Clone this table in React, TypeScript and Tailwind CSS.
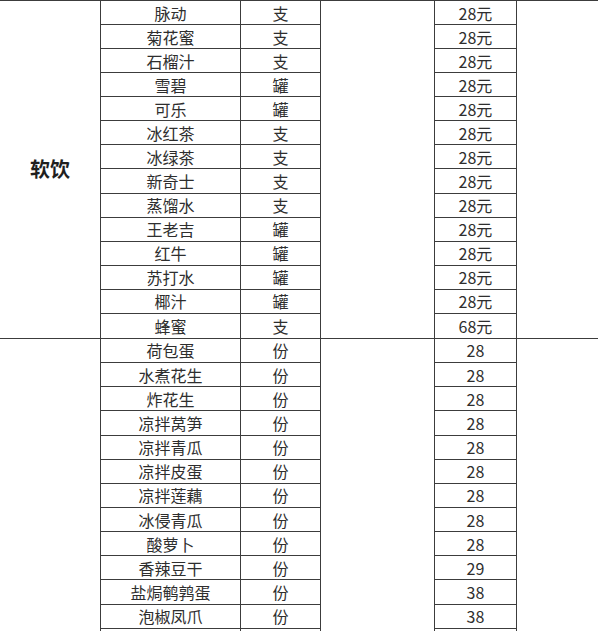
const drinks = [
  { name: '脉动', unit: '支', price: '28元' },
  { name: '菊花蜜', unit: '支', price: '28元' },
  { name: '石榴汁', unit: '支', price: '28元' },
  { name: '雪碧', unit: '罐', price: '28元' },
  { name: '可乐', unit: '罐', price: '28元' },
  { name: '冰红茶', unit: '支', price: '28元' },
  { name: '冰绿茶', unit: '支', price: '28元' },
  { name: '新奇士', unit: '支', price: '28元' },
  { name: '蒸馏水', unit: '支', price: '28元' },
  { name: '王老吉', unit: '罐', price: '28元' },
  { name: '红牛', unit: '罐', price: '28元' },
  { name: '苏打水', unit: '罐', price: '28元' },
  { name: '椰汁', unit: '罐', price: '28元' },
  { name: '蜂蜜', unit: '支', price: '68元' },
];

const snacks = [
  { name: '荷包蛋', unit: '份', price: '28' },
  { name: '水煮花生', unit: '份', price: '28' },
  { name: '炸花生', unit: '份', price: '28' },
  { name: '凉拌莴笋', unit: '份', price: '28' },
  { name: '凉拌青瓜', unit: '份', price: '28' },
  { name: '凉拌皮蛋', unit: '份', price: '28' },
  { name: '凉拌莲藕', unit: '份', price: '28' },
  { name: '冰侵青瓜', unit: '份', price: '28' },
  { name: '酸萝卜', unit: '份', price: '28' },
  { name: '香辣豆干', unit: '份', price: '29' },
  { name: '盐焗鹌鹑蛋', unit: '份', price: '38' },
  { name: '泡椒凤爪', unit: '份', price: '38' },
  // next row starts at the bottom edge of the shot
  { name: '', unit: '', price: '' },
];

type Item = { name: string; unit: string; price: string };

function Section({ label, items, rowH }: { label: string; items: Item[]; rowH: string }) {
  return (
    <div className="flex w-[598px] border-t border-[#3c3c3c]">
      {/* category */}
      <div className="w-[100px] flex items-center justify-center text-[20px] font-bold text-[#1f1f1f]">
        {label}
      </div>

      {/* name + unit */}
      <div className="w-[221px] border-x border-[#3c3c3c] flex flex-col">
        {items.map((it, i) => (
          <div
            key={i}
            className={`flex ${rowH} ${i < items.length - 1 ? 'border-b border-[#3c3c3c]' : ''}`}
          >
            <div className="w-[140px] border-r border-[#3c3c3c] flex items-center justify-center">
              {it.name}
            </div>
            <div className="flex-1 flex items-center justify-center">{it.unit}</div>
          </div>
        ))}
      </div>

      <div className="w-[113px]" />

      {/* price */}
      <div className="w-[83px] border-x border-[#3c3c3c] flex flex-col">
        {items.map((it, i) => (
          <div
            key={i}
            className={`${rowH} flex items-center justify-center ${i < items.length - 1 ? 'border-b border-[#3c3c3c]' : ''}`}
          >
            {it.price}
          </div>
        ))}
      </div>

      <div className="w-[81px]" />
    </div>
  );
}

export default function App() {
  return (
    <div
      className="w-[600px] min-h-[631px] bg-white text-[16px] leading-none text-[#2e2e2e]"
      style={{ fontFamily: '"Noto Sans CJK SC", "Noto Sans", sans-serif' }}
    >
      <Section label="软饮" items={drinks} rowH="h-[24.07px]" />
      <Section label="" items={snacks} rowH="h-[24.17px]" />
    </div>
  );
}
